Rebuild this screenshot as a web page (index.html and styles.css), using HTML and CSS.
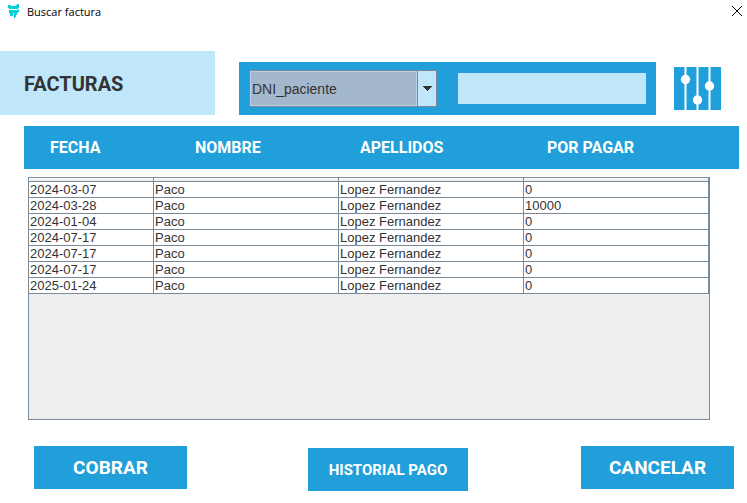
FILE: index.html
```html
<!DOCTYPE html>
<html lang="es">
<head>
<meta charset="utf-8">
<title>Buscar factura</title>
<link rel="stylesheet" href="styles.css">
</head>
<body>
<header class="titlebar">
  <svg class="logo" width="12" height="15" viewBox="0 0 12 15" aria-hidden="true">
    <path fill="#08cfd6" d="M0 1h3v1h5V1h1V0h2v4h-1v1H1V4H0zM1 6h9V5h1v3h-1v1H9v2H8v2H7v1H6V9H5v3H2V9H1z"/>
  </svg>
  <h1 class="window-title">Buscar factura</h1>
  <button class="close" type="button" aria-label="Cerrar">
    <svg width="10" height="10" viewBox="0 0 10 10"><path d="M0 0l10 10M10 0L0 10" stroke="#000" fill="none"/></svg>
  </button>
</header>
<main>
  <div class="toolbar">
    <h2 class="heading">FACTURAS</h2>
    <form class="search">
      <div class="combo">
        <select aria-label="Campo de búsqueda"><option>DNI_paciente</option></select>
        <span class="arrow"><svg width="10" height="5" viewBox="0 0 10 5" shape-rendering="crispEdges"><path d="M0 0h10L5 5z" fill="#333"/></svg></span>
      </div>
      <input class="query" type="text" aria-label="Texto de búsqueda">
    </form>
    <button class="filter" type="button" aria-label="Filtrar">
      <svg width="47" height="43" viewBox="0 0 47 43">
        <g fill="#8fd0ee"><path d="M10 0h3v43h-3zM22 0h3v43h-3zM34 0h3v43h-3z"/></g>
        <g fill="#fff"><path d="M11 0h1v43h-1zM23 0h1v43h-1zM35 0h1v43h-1z"/><circle cx="11.5" cy="12.5" r="4.7"/><circle cx="23.5" cy="33" r="4.7"/><circle cx="35.5" cy="19" r="4.7"/></g>
      </svg>
    </button>
  </div>
  <div class="columns">
    <span>FECHA</span><span>NOMBRE</span><span>APELLIDOS</span><span>POR PAGAR</span>
  </div>
  <div class="list">
    <table aria-label="Facturas">
      <colgroup><col class="date"><col class="name"><col class="name"><col class="name"></colgroup>
      <thead><tr><th></th><th></th><th></th><th></th></tr></thead>
      <tbody>
        <tr><td>2024-03-07</td><td>Paco</td><td>Lopez Fernandez</td><td>0</td></tr>
        <tr><td>2024-03-28</td><td>Paco</td><td>Lopez Fernandez</td><td>10000</td></tr>
        <tr><td>2024-01-04</td><td>Paco</td><td>Lopez Fernandez</td><td>0</td></tr>
        <tr><td>2024-07-17</td><td>Paco</td><td>Lopez Fernandez</td><td>0</td></tr>
        <tr><td>2024-07-17</td><td>Paco</td><td>Lopez Fernandez</td><td>0</td></tr>
        <tr><td>2024-07-17</td><td>Paco</td><td>Lopez Fernandez</td><td>0</td></tr>
        <tr><td>2025-01-24</td><td>Paco</td><td>Lopez Fernandez</td><td>0</td></tr>
      </tbody>
    </table>
  </div>
  <div class="actions">
    <button class="action" type="button">COBRAR</button>
    <button class="action history" type="button">HISTORIAL PAGO</button>
    <button class="action" type="button">CANCELAR</button>
  </div>
</main>
</body>
</html>
```
FILE: styles.css
```css
:root {
  --blue: #209fda;
  --pale: #bfe6f9;
  --line: #7a8a99;
}
* { box-sizing: border-box; }
body {
  margin: 0;
  background: #fff;
  color: #333;
  font-family: "Liberation Sans", Arial, sans-serif;
}
button { border: 0; padding: 0; background: none; }
svg { display: block; }
.titlebar {
  display: flex;
  align-items: center;
  height: 24px;
  padding: 0 5px 2px 8px;
}
.window-title {
  flex: 1;
  margin: 0 0 0 7px;
  padding-top: 2px;
  color: #000;
  font: 400 11px/16px "Open Sans", sans-serif;
}
.toolbar {
  display: flex;
  align-items: flex-end;
  margin: 27px 26px 11px 0;
}
.heading {
  width: 215px;
  margin: 0 24px 0 0;
  padding: 2px 24px 0;
  background: var(--pale);
  font: 700 20px/62px Roboto, sans-serif;
}
.search {
  flex: 1;
  display: grid;
  grid-template-columns: 1fr 1fr;
  align-items: center;
  gap: 21px;
  height: 53px;
  padding: 0 10px;
  background: var(--blue);
}
.combo {
  display: flex;
  height: 37px;
  border: 1px solid var(--line);
}
.combo select {
  flex: 1;
  min-width: 0;
  appearance: none;
  border: 1px solid #b8cfe5;
  border-radius: 0;
  padding: 0 1px;
  background: #a3b8cc;
  color: #333;
  font: 14px "Liberation Sans", Arial, sans-serif;
}
.arrow {
  display: grid;
  place-items: center;
  width: 19px;
  border-left: 1px solid var(--line);
  background: var(--pale);
  pointer-events: none;
}
.query {
  width: 100%;
  height: 31px;
  border: 0;
  padding: 0 4px;
  background: var(--pale);
  font: 14px "Liberation Sans", Arial, sans-serif;
}
.filter {
  margin: 0 0 5px 18px;
  background: var(--blue);
}
.columns {
  display: grid;
  grid-template-columns: 145fr 165fr 187fr 192fr;
  margin: 0 8px 8px 24px;
  padding: 0 0 0 26px;
  background: var(--blue);
  color: #fff;
  font: 700 16px/43px Roboto, sans-serif;
}
.list {
  min-height: 243px;
  margin: 0 37px 26px 28px;
  border: 1px solid var(--line);
  background: #eee;
}
table {
  width: 100%;
  table-layout: fixed;
  border-collapse: separate;
  border-spacing: 0;
  font-size: 13px;
}
.date { width: 18.4%; }
th {
  height: 4px;
  padding: 0;
  border-right: 1px solid var(--line);
  border-bottom: 1px solid var(--line);
  background: #eee;
  box-shadow: inset 1px 1px #fff;
}
td {
  height: 16px;
  padding: 0 1px;
  border-right: 1px solid var(--line);
  border-bottom: 1px solid var(--line);
  background: #fff;
  line-height: 15px;
}
.actions {
  display: flex;
  justify-content: space-between;
  margin: 0 13px 12px 34px;
}
.action {
  width: 153px;
  height: 43px;
  background: var(--blue);
  color: #fff;
  font: 700 19px Roboto, sans-serif;
}
.history {
  width: 160px;
  margin: 2px 0 0 8px;
  font-size: 15px;
}
```
